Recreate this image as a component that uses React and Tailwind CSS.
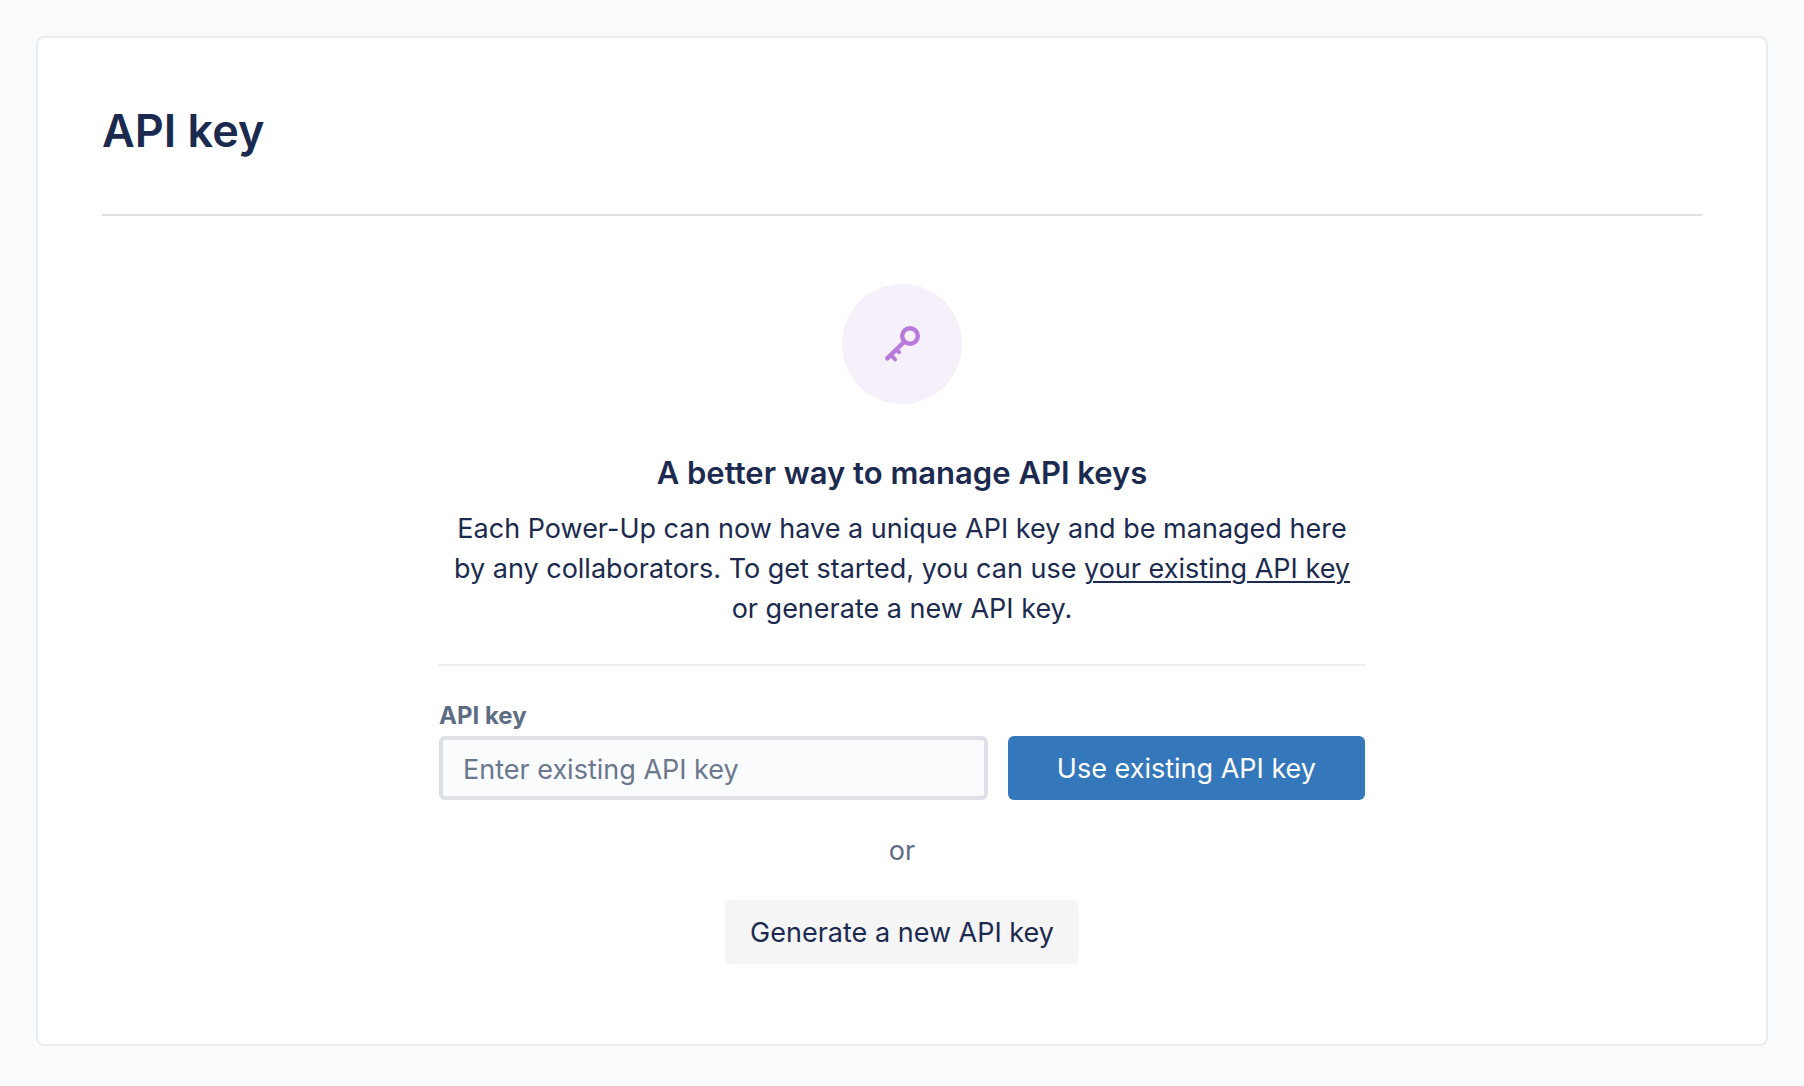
function KeyIcon() {
  return (
    <svg
      className="size-12"
      viewBox="0 0 48 48"
      fill="none"
      stroke="#b879dc"
      strokeWidth="4"
      strokeLinecap="round"
      aria-hidden="true"
    >
      <circle cx="32" cy="16" r="7.8" strokeWidth="4.4" />
      <path d="M25.5 22.5 9.3 38.4" strokeWidth="4.4" />
      <path d="m13.5 35.5 3.6 4" />
      <path d="m18.5 30 2.6 2.2" />
    </svg>
  );
}

export default function App() {
  return (
    <div className="min-h-screen bg-[#fafbfd] p-9 font-['Inter','Liberation_Sans',sans-serif] text-[#1b2a4e]">
      <main className="rounded-lg border-2 border-[#ebecf0] bg-white px-16 pt-16 pb-20">
        <header className="border-b-2 border-[#dfe0e6] pb-[54px]">
          <h1 className="text-[45px] leading-[58px] font-semibold">API key</h1>
        </header>

        <section className="mx-auto flex max-w-[926px] flex-col items-center pt-[68px]">
          <div className="flex size-30 items-center justify-center rounded-full bg-[#f5f0f9]">
            <KeyIcon />
          </div>
          <h2 className="mt-[49px] text-center text-[31px] leading-10 font-semibold">
            A better way to manage API keys
          </h2>
          <p className="mt-4 text-center text-[27px] leading-10">
            Each Power-Up can now have a unique API key and be managed here by any collaborators. To
            get started, you can use{" "}
            <a href="#existing-key" className="underline decoration-2 underline-offset-3">
              your existing API key
            </a>{" "}
            or generate a new API key.
          </p>

          <form
            className="mt-[35px] w-full border-t-2 border-[#ebecf2] pt-[34px]"
            onSubmit={(event) => event.preventDefault()}
          >
            <label
              htmlFor="existing-key"
              className="block text-[24px] leading-8 font-bold text-[#5e6c84]"
            >
              API key
            </label>
            <div className="mt-1 flex gap-5">
              <input
                id="existing-key"
                type="text"
                placeholder="Enter existing API key"
                className="h-16 min-w-0 flex-1 rounded-md border-4 border-[#dfe0e5] bg-[#fafbfd] px-5 pt-0.5 text-[27px] placeholder:text-[#6b778c]"
              />
              <button
                type="submit"
                className="h-16 rounded-md bg-[#3477bb] px-[49px] pt-0.5 text-[27px] text-white"
              >
                Use existing API key
              </button>
            </div>
          </form>

          <p className="mt-[31px] mb-[29px] text-[27px] leading-10 text-[#5e6c84]">or</p>
          <button type="button" className="h-16 rounded-md bg-[#f5f5f5] px-[25px] pt-0.5 text-[27px]">
            Generate a new API key
          </button>
        </section>
      </main>
    </div>
  );
}
